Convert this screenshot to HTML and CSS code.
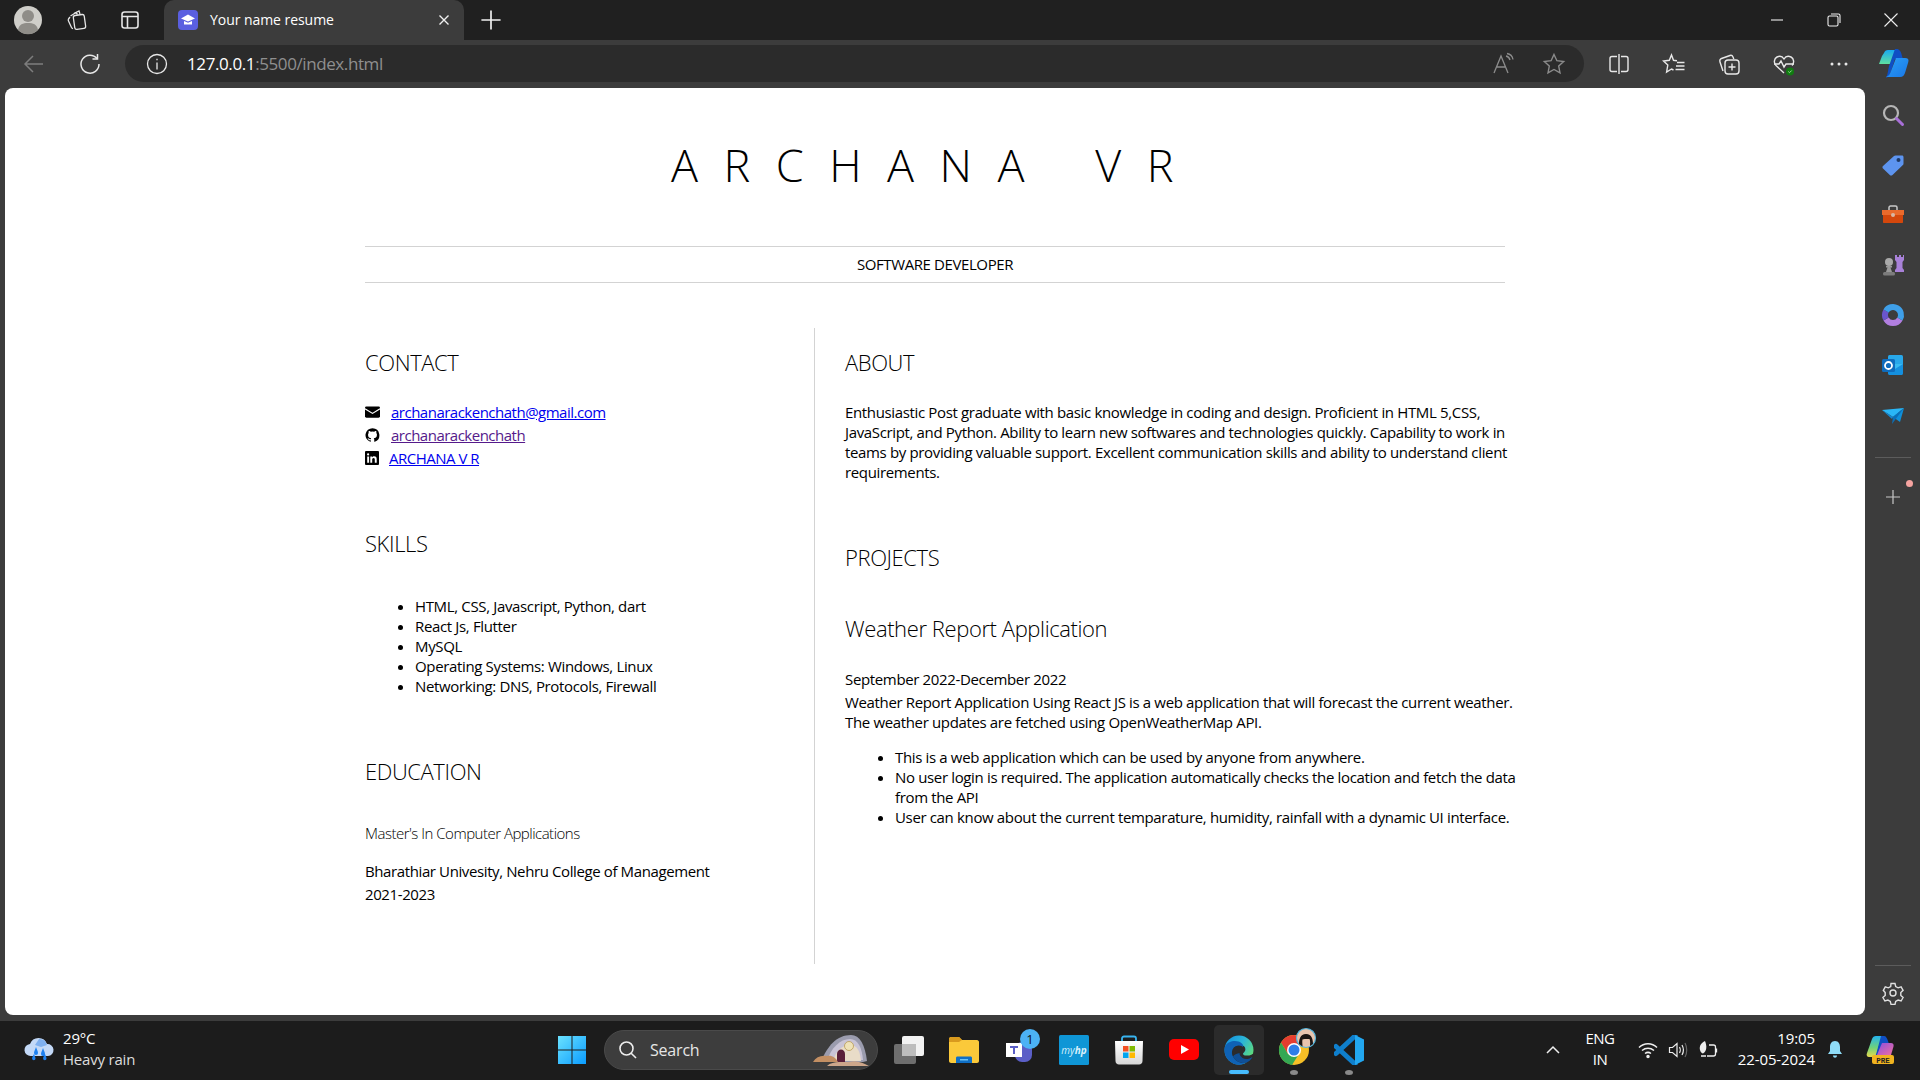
FILE: index.html
```html
<!DOCTYPE html>
<html lang="en">
<head>
<meta charset="utf-8">
<title>Your name resume</title>
<link rel="stylesheet" href="styles.css">
</head>
<body>
<div class="screen">
  <div class="tabstrip">
    <div class="strip-left">
      <svg class="ic30" viewBox="0 0 30 30"><circle cx="15" cy="15" r="14" fill="#cfcec9"/><circle cx="15" cy="11" r="6" fill="#8f8d88"/><path d="M5 25c1-6 5-7 10-7s9 1 10 7a14 14 0 0 1-20 0z" fill="#8f8d88"/></svg>
      <svg class="ic24 slot-ws" viewBox="0 0 24 24" fill="none" stroke="#e6e6e6" stroke-width="1.300"><path d="M9 5.500 14 3l1 3"/><path d="M5.500 8 11 4.500l1.500 2"/><rect x="9" y="7" width="11" height="14" rx="2" transform="rotate(-8 14 14)"/><path d="M5 9 3.500 11c-.4.600-.4 1.200 0 2l3 6.500c.4.800 1 1 1.500 1"/></svg>
      <svg class="ic24 slot-vt" viewBox="0 0 24 24" fill="none" stroke="#e6e6e6" stroke-width="1.600"><rect x="4" y="4" width="16" height="16" rx="2.500"/><path d="M4 8.500h16M9.500 8.500V20"/></svg>
    </div>
    <div class="tab">
      <svg class="favicon" viewBox="0 0 20 20"><rect width="20" height="20" rx="4" fill="#5a5fe0"/><path d="M10 4.500 3 8.500l7 3 7-3z" fill="#fff"/><path d="M6 11v3.500h8V11l-4 1.700z" fill="#fff"/></svg>
      <span class="tab-title">Your name resume</span>
      <svg class="tab-x" viewBox="0 0 12 12" stroke="#f0f0f0" stroke-width="1.400"><path d="M1.500 1.500l9 9M10.500 1.500l-9 9"/></svg>
    </div>
    <svg class="ic24 slot-plus" viewBox="0 0 20 20" stroke="#f0f0f0" stroke-width="1.400"><path d="M10 2v16M2 10h16"/></svg>
    <div class="win-btns">
      <svg class="ic16" viewBox="0 0 16 16" stroke="#eee" stroke-width="1.100"><path d="M2 8h12"/></svg>
      <svg class="ic16" viewBox="0 0 16 16" fill="none" stroke="#eee" stroke-width="1.100"><rect x="2" y="4" width="10" height="10" rx="1.500"/><path d="M5 2h7.500c.9 0 1.500.6 1.500 1.500V11"/></svg>
      <svg class="ic16" viewBox="0 0 16 16" stroke="#eee" stroke-width="1.100"><path d="M1.500 1.500l13 13M14.500 1.500l-13 13"/></svg>
    </div>
  </div>

  <div class="toolbar">
    <svg class="ic24 slot-back" viewBox="0 0 24 24" fill="none" stroke="#7d7d7d" stroke-width="1.500"><path d="M21 12H3.500M11 4l-8 8 8 8"/></svg>
    <svg class="ic24 slot-refresh" viewBox="0 0 24 24" fill="none" stroke="#e8e8e8" stroke-width="1.500"><path d="M19 6.500A9 9 0 1 0 21 12"/><path d="M19.500 2v5h-5"/></svg>
    <div class="omnibox">
      <svg class="ic24" viewBox="0 0 24 24" fill="none" stroke="#e8e8e8" stroke-width="1.300"><circle cx="12" cy="12" r="9.500"/><path d="M12 10.500V17.500M12 6.800v1.400"/></svg>
      <span class="url"><span class="url-host">127.0.0.1</span>:5500/index.html</span>
      <svg class="ic24 slot-read" viewBox="0 0 24 24" fill="none" stroke="#8c8c8c" stroke-width="1.300"><path d="M2 21 9 4l7 17M5 15h8"/><path d="M14 4c2 .5 3.500 2 4 4M15 1.500c3 .5 5.500 3 6 6"/></svg>
      <svg class="ic24 slot-star" viewBox="0 0 24 24" fill="none" stroke="#8c8c8c" stroke-width="1.400"><path d="M12 2.500l2.900 6.200 6.800.8-5 4.600 1.300 6.700L12 17.500l-6 3.300 1.300-6.700-5-4.600 6.800-.8z"/></svg>
    </div>
    <div class="tools">
      <svg class="ic24" viewBox="0 0 24 24" fill="none" stroke="#e8e8e8" stroke-width="1.400"><path d="M10 4.500H5a2 2 0 0 0-2 2v11a2 2 0 0 0 2 2h5M14 4.500h5a2 2 0 0 1 2 2v11a2 2 0 0 1-2 2h-5M12 2v20"/></svg>
      <svg class="ic24" viewBox="0 0 24 24" fill="none" stroke="#e8e8e8" stroke-width="1.400"><path d="M15 8.800 11.500 8.300 9.500 3 7.300 8.300 1.500 9l4.300 4-1.200 7 4.900-3 2 1"/><path d="M15 10.500h7.500M14 14h8.500M13.500 17.500h9"/></svg>
      <svg class="ic24" viewBox="0 0 24 24" fill="none" stroke="#e8e8e8" stroke-width="1.400"><path d="M6 19 3 10c-.5-1.500 0-3 1.500-3.500L13 3.500c1.500-.5 2.500.3 3 1.500l.8 2"/><rect x="8" y="8" width="14" height="14" rx="3"/><path d="M15 11.500v7M11.500 15h7"/></svg>
      <svg class="ic24" viewBox="0 0 24 24" fill="none" stroke="#e8e8e8" stroke-width="1.400"><path d="M12 21 4 13.500C1.500 11 2 6.500 5 5s5.500-.5 7 2c1.500-2.500 4-3.500 7-2s3.500 6 1 8.500"/><path d="M2 12h5l2-3 3 6 2-3h8"/><circle cx="18" cy="19.500" r="4" fill="#107c10" stroke="none"/><path d="M16.300 19.500l1.200 1.200 2.200-2.200" stroke="#9fd89f" stroke-width="1"/></svg>
      <svg class="ic24" viewBox="0 0 24 24" fill="#e8e8e8"><circle cx="5" cy="12" r="1.500"/><circle cx="12" cy="12" r="1.500"/><circle cx="19" cy="12" r="1.500"/></svg>
    </div>
    <svg class="ic32 slot-copilot" viewBox="0 0 32 32"><defs><linearGradient id="cpa" x1="0" y1="0" x2="0" y2="1"><stop offset="0" stop-color="#19a8f0"/><stop offset="1" stop-color="#5fe0a0"/></linearGradient><linearGradient id="cpb" x1="0" y1="0" x2="1" y2="1"><stop offset="0" stop-color="#2aa0f5"/><stop offset="1" stop-color="#1a78e8"/></linearGradient></defs><path d="M7 5c.7-2 2-3 4-3h8l-4 14H2L5 8z" fill="url(#cpa)"/><path d="M18 1h2c2 0 4 2 5 7l1 3h-8l-4 12c-.8 3-2 6-5 7 2-4 2-8 3-12z" fill="#0f4fc4"/><path d="M19 10h9c3 0 4 1.500 3.300 4l-3 10c-.8 3-2.300 5-5.300 5H9c3-1 4-3 5-6z" fill="url(#cpb)"/></svg>
  </div>

  <div class="middle">
    <main class="page">
      <header class="head">
        <h1 class="name">ARCHANA VR</h1>
      </header>
      <div class="role">SOFTWARE DEVELOPER</div>
      <div class="cols">
        <div class="col-left">
          <section class="sec-contact">
            <h2 class="title">CONTACT</h2>
            <div class="contact-row">
              <svg class="ci" viewBox="0 0 16 12"><rect width="16" height="12" rx="1.500" fill="#000"/><path d="M0 2.500 8 7.500 16 2.500" fill="none" stroke="#fff" stroke-width="1.200"/></svg>
              <a class="link" href="#mail">archanarackenchath@gmail.com</a>
            </div>
            <div class="contact-row">
              <svg class="ci" viewBox="0 0 16 16"><path d="M8 .2a8 8 0 0 0-2.500 15.600c.4.100.5-.2.500-.4v-1.400c-2.200.5-2.700-1-2.700-1-.4-.9-.9-1.200-.9-1.200-.7-.5.100-.5.100-.5.800.1 1.200.8 1.200.8.700 1.200 1.900.9 2.300.7.100-.5.300-.9.500-1.100-1.800-.2-3.600-.9-3.600-4 0-.9.300-1.600.8-2.100-.1-.2-.4-1 .1-2.100 0 0 .7-.2 2.200.8a7.600 7.600 0 0 1 4 0c1.500-1 2.200-.8 2.200-.8.400 1.100.2 1.900.1 2.100.5.600.8 1.300.8 2.100 0 3.100-1.900 3.700-3.700 3.900.3.300.6.800.6 1.500v2.200c0 .2.100.5.600.4A8 8 0 0 0 8 .2z" fill="#000"/></svg>
              <a class="link visited" href="#gh">archanarackenchath</a>
            </div>
            <div class="contact-row row-li">
              <svg class="ci" viewBox="0 0 14 14"><rect width="14" height="14" rx="1" fill="#000"/><path d="M2.200 5.400h1.900v6.400H2.200zM3.100 2.300a1.100 1.100 0 1 1 0 2.200 1.100 1.100 0 0 1 0-2.200zM5.300 5.400h1.800v.9c.4-.6 1-1.100 2-1.100 2 0 2.600 1.300 2.600 3v3.600H9.800V8.600c0-.8-.2-1.700-1.200-1.700S7.200 7.700 7.200 8.600v3.200H5.300z" fill="#fff"/></svg>
              <a class="link" href="#li">ARCHANA V R</a>
            </div>
          </section>
          <section class="sec-skills">
            <h2 class="title">SKILLS</h2>
            <ul class="list">
              <li>HTML, CSS, Javascript, Python, dart</li>
              <li>React Js, Flutter</li>
              <li>MySQL</li>
              <li>Operating Systems: Windows, Linux</li>
              <li>Networking: DNS, Protocols, Firewall</li>
            </ul>
          </section>
          <section class="sec-edu">
            <h2 class="title">EDUCATION</h2>
            <h3 class="degree">Master's In Computer Applications</h3>
            <p class="edu-line">Bharathiar Univesity, Nehru College of Management</p>
            <p class="edu-line">2021-2023</p>
          </section>
        </div>
        <div class="col-right">
          <section class="sec-about">
            <h2 class="title">ABOUT</h2>
            <p class="para">Enthusiastic Post graduate with basic knowledge in coding and design. Proficient in HTML 5,CSS,<br>JavaScript, and Python. Ability to learn new softwares and technologies quickly. Capability to work in<br>teams by providing valuable support. Excellent communication skills and ability to understand client<br>requirements.</p>
          </section>
          <section class="sec-projects">
            <h2 class="title">PROJECTS</h2>
            <h3 class="project-name">Weather Report Application</h3>
            <div class="dates">September 2022-December 2022</div>
            <p class="para">Weather Report Application Using React JS is a web application that will forecast the current weather.<br>The weather updates are fetched using OpenWeatherMap API.</p>
            <ul class="list list-project">
              <li>This is a web application which can be used by anyone from anywhere.</li>
              <li>No user login is required. The application automatically checks the location and fetch the data<br>from the API</li>
              <li>User can know about the current temparature, humidity, rainfall with a dynamic UI interface.</li>
            </ul>
          </section>
        </div>
      </div>
    </main>
    <aside class="sidebar">
      <svg class="ic24 sb-first" viewBox="0 0 24 24" fill="none"><circle cx="10" cy="10" r="7" stroke="#b5b5b5" stroke-width="2.200"/><path d="M15.500 15.500l6 6" stroke="#a86fd8" stroke-width="3" stroke-linecap="round"/></svg>
      <svg class="ic24" viewBox="0 0 24 24"><path d="M2 13 13 3c.4-.4 1-.6 1.600-.6H21c.9 0 1.500.6 1.500 1.500v6.500c0 .6-.2 1.200-.6 1.600L11.500 22c-.8.700-2 .7-2.700 0L2 15.500c-.7-.7-.7-1.800 0-2.500z" fill="#5d94ef"/><circle cx="17.500" cy="7" r="2" fill="#1f3a66"/></svg>
      <svg class="ic24" viewBox="0 0 24 24"><path d="M8 7V4.500C8 3.700 8.700 3 9.500 3h5c.8 0 1.500.7 1.500 1.500V7" fill="none" stroke="#c8c8c8" stroke-width="1.500"/><path d="M1 7h22v5H1z" fill="#ea6a2c"/><path d="M2 12h20v7c0 .6-.4 1-1 1H3c-.6 0-1-.4-1-1z" fill="#d4470c"/><circle cx="12" cy="12" r="2" fill="#d8b7a5"/></svg>
      <svg class="ic24" viewBox="0 0 24 24"><path d="M14 2h2v2h2V2h2v2h2V2h1v5l-1.500 2v6l1.500 2v2h-9v-2l1.500-2V9L14 7z" fill="#a881d8"/><circle cx="8" cy="9" r="4" fill="#a9a9a9"/><path d="M5 13h6v1.500H9.500L11 19H5l1.500-4.500H5z" fill="#9a9a9a"/><rect x="2" y="19" width="12" height="3.500" rx="1.500" fill="#7c7c7c"/></svg>
      <svg class="ic24" viewBox="0 0 24 24" fill="none" stroke-width="6"><path d="M18.930 16A8 8 0 0 1 5.070 16" stroke="#b27fe0"/><path d="M5.070 16A8 8 0 0 1 5.070 8" stroke="#6a55cc"/><path d="M5.070 8A8 8 0 0 1 18.930 16" stroke="#3f9fe8"/></svg>
      <svg class="ic24" viewBox="0 0 24 24"><rect x="7" y="2" width="15" height="15" rx="1.500" fill="#28a8ea"/><path d="M7 11h15v9.500c0 .8-.7 1.500-1.500 1.500h-12c-.8 0-1.500-.7-1.500-1.500z" fill="#1490df"/><path d="M22 11l-8 5-7-5" fill="#50d9ff" opacity=".6"/><rect x="1" y="6" width="13" height="13" rx="1.500" fill="#0f6cbd"/><circle cx="7.500" cy="12.500" r="3.500" fill="none" stroke="#fff" stroke-width="1.800"/></svg>
      <svg class="ic24" viewBox="0 0 24 24"><path d="M1 7l22-2-11 9z" fill="#29b6f6"/><path d="M23 5 12 14l7 5z" fill="#0f8fd8"/><path d="M23 5 12 14l-1 7 3-4z" fill="#0a6fb8"/><path d="M1 7l11 7-1 2z" fill="#1487d0"/></svg>
      <div class="sb-rule sb-rule-top"></div>
      <div class="sb-add">
        <svg class="ic16" viewBox="0 0 16 16" stroke="#c8c8c8" stroke-width="1.200"><path d="M8 1v14M1 8h14"/></svg>
        <span class="sb-dot"></span>
      </div>
      <div class="sb-bottom">
        <div class="sb-rule"></div>
        <svg class="ic24 sb-gear" viewBox="0 0 24 24" fill="none" stroke="#e0e0e0" stroke-width="1.400"><circle cx="12" cy="12" r="3"/><path d="M10 2.500h4l.7 3 2.400 1.300 3-.9 2 3.400-2.300 2.200v2.900l2.300 2.100-2 3.500-3-.9-2.400 1.300-.7 3h-4l-.7-3-2.400-1.300-3 .9-2-3.500 2.300-2.100v-2.900L2.300 9.300l2-3.400 3 .9 2.400-1.300z"/></svg>
      </div>
    </aside>
  </div>

  <footer class="taskbar">
    <div class="weather">
      <svg class="ic32" viewBox="0 0 32 32"><path d="M8 22a6 6 0 0 1-1-12 9 9 0 0 1 17 0 6 6 0 0 1 1 12z" fill="#c3d9f7"/><path d="M16 5a8 8 0 0 1 8 6l-6 2-6-2z" fill="#7fb0ef"/><path d="M13 13c1 3 2 4 2 6a2 2 0 0 1-4 0c0-2 1-3 2-6zM20 14c1 3 2 4 2 6a2 2 0 0 1-4 0c0-2 1-3 2-6zM11 20c.7 2 1.500 3 1.500 4.500a1.700 1.700 0 0 1-3.400 0C9.100 23 10 22 11 20zM22 20c.7 2 1.500 3 1.500 4.500a1.700 1.700 0 0 1-3.400 0c0-1.500.9-2.500 1.900-4.500z" fill="#1d80f0"/></svg>
      <div class="weather-text"><span>29°C</span><span class="weather-sub">Heavy rain</span></div>
    </div>
    <div class="task-center">
      <svg class="ic30 start" viewBox="0 0 30 30"><defs><linearGradient id="win" x1="0" y1="0" x2="1" y2="1"><stop offset="0" stop-color="#6be2ff"/><stop offset="1" stop-color="#0a9cff"/></linearGradient></defs><path d="M1 1h13.500v13.500H1zM15.500 1H29v13.500H15.500zM1 15.500h13.500V29H1zM15.500 15.500H29V29H15.500z" fill="url(#win)"/></svg>
      <div class="searchbox">
        <svg class="ic20" viewBox="0 0 20 20" fill="none" stroke="#eee" stroke-width="1.600"><circle cx="8.500" cy="8.500" r="6.500"/><path d="M13.200 13.200 18 18"/></svg>
        <span class="search-text">Search</span>
        <svg class="search-art" viewBox="0 0 58 32"><path d="M8 28C14 12 24 1 38 1c9 0 14 10 16 26l-4 1z" fill="#9b9cae"/><path d="M14 27C18 14 27 5 37 5c8 0 12 9 13 21z" fill="#c9c4d6"/><path d="M20 27c3-10 9-16 17-16s10 7 11 16z" fill="#e9dcc8"/><path d="M24 28v-8c0-6 8-6 8 0v8z" fill="#5a1f3a"/><circle cx="36" cy="12" r="4.500" fill="#efe2b8" stroke="#b89a55" stroke-width=".8"/><path d="M0 28c3-5 8-7 14-6 5-1 9 2 11 6z" fill="#c38f63"/><path d="M14 32c3-3 8-4 12-4h10c8-2 14 1 20 4z" fill="#cda68a"/></svg>
      </div>
      <div class="apps">
        <svg class="ic30" viewBox="0 0 30 30"><rect x="8" y="1" width="22" height="20" rx="2" fill="#f2f2f2"/><rect y="9" width="22" height="20" rx="2" fill="#6e6e6e"/><rect x="8" y="9" width="14" height="12" fill="#bdbdbd"/></svg>
        <svg class="ic30" viewBox="0 0 30 30"><path d="M0 4c0-1 .7-2 2-2h8l3 3h15c1 0 2 1 2 2v19c0 1-1 2-2 2H2c-1 0-2-1-2-2z" fill="#fbc93a"/><path d="M0 4c0-1 .7-2 2-2h8l3 3-3 2H0z" fill="#d99a1e"/><path d="M7 23c0-1 .6-1.500 1.500-1.500h13c.9 0 1.500.5 1.500 1.500v5H7z" fill="#0f6fc6"/><rect x="11" y="24" width="8" height="1.500" fill="#6cc3f5"/></svg>
        <div class="app-wrap">
          <svg class="ic30" viewBox="0 0 30 30"><rect x="11" y="7" width="17" height="20" rx="7" fill="#5b5fc7"/><rect x="2" y="8" width="16" height="14" fill="#fff"/><path d="M6 11h8v2h-3v6H9v-6H6z" fill="#5b5fc7"/></svg>
          <span class="app-badge">1</span>
        </div>
        <svg class="ic30" viewBox="0 0 30 30"><rect width="30" height="30" rx="1.500" fill="#0f96d6"/><text x="15" y="19" class="myhp">my<tspan class="myhp-b">hp</tspan></text></svg>
        <svg class="ic30" viewBox="0 0 30 30"><defs><linearGradient id="bag" x1="0" y1="0" x2="0" y2="1"><stop offset="0" stop-color="#fff"/><stop offset="1" stop-color="#d6d6d6"/></linearGradient></defs><path d="M8 8V3.500C8 2 9 1.500 10 1.500h10c1 0 2 .5 2 2V8" fill="none" stroke="#38b4f0" stroke-width="1.800"/><path d="M1 6h28l-.5 20c0 2-1.500 3.500-3.500 3.500H5c-2 0-3.500-1.500-3.500-3.500z" fill="url(#bag)"/><rect x="9" y="11" width="5.500" height="5.500" fill="#f25022"/><rect x="15.500" y="11" width="5.500" height="5.500" fill="#7fba00"/><rect x="9" y="17.500" width="5.500" height="5.500" fill="#00a4ef"/><rect x="15.500" y="17.500" width="5.500" height="5.500" fill="#ffb900"/></svg>
        <svg class="ic30" viewBox="0 0 30 30"><rect y="4" width="30" height="21" rx="5" fill="#f00"/><path d="M12 10l8 4.500-8 4.500z" fill="#fff"/></svg>
        <div class="app-active">
          <svg class="ic30" viewBox="0 0 30 30"><defs><linearGradient id="edg" x1="0" y1="0" x2="1" y2=".6"><stop offset="0" stop-color="#0f8ce0"/><stop offset=".55" stop-color="#2bb5d8"/><stop offset="1" stop-color="#5fdc7a"/></linearGradient></defs><circle cx="15" cy="15" r="14.500" fill="url(#edg)"/><path d="M30 17c-1 3-5 4-9 3.500-1.500-.2-2-1.200-2-2 2-2 3-3.500 2-6-1.500-3-6-3.500-9-2C8 12 6.500 16 7.500 20c1 4 4 7 8 8 4 .8 8-.3 11-3 2-2 3.500-5 3.500-8z" fill="#2b2b2b"/><path d="M.5 15C.5 8.500 6 6 11 6c5 0 9 3 8 6-1-1.500-5-2.500-8-.5-3 2-4 6.500-2 10 2 4 7 7 12.500 6.500-2 1-4 1.900-6.500 1.900C6.500 29.500.5 23 .5 15z" fill="#0f62b5"/><path d="M9 21.500c2 4 7 7 12.500 6.500 3-1 5.500-3 7-6-3 2-7 3-10 1-2-1.500-3-3-3-5-2 .5-5 1-6.500 3.500z" fill="#0f4f96"/></svg>
          <span class="pill-active"></span>
        </div>
        <div class="app-run">
          <svg class="ic30 over" viewBox="0 0 30 30"><circle cx="15" cy="15" r="15" fill="#f6bf26"/><path d="M15 0A15 15 0 0 0 2 7.500L9 19l6-9h13A15 15 0 0 0 15 0z" fill="#e53d30"/><path d="M2 7.500A15 15 0 0 0 13 30l6-9.500L9 19z" fill="#34a853"/><circle cx="15" cy="15" r="7" fill="#fff"/><circle cx="15" cy="15" r="5.500" fill="#2f7ee8"/><circle cx="27" cy="3" r="9.500" fill="#e8c4ae" stroke="#55b5dc" stroke-width="1.200"/><path d="M20 9c0-4 1-10 7-10s7 6 7 10l-3 2c0-3 .5-5-.5-7-2 0-6-.5-7 .5-.5 2 0 4 0 7z" fill="#1c1513"/></svg>
          <span class="dot-run"></span>
        </div>
        <div class="app-run">
          <svg class="ic30" viewBox="0 0 30 30"><path d="M21 1 2 18.500M2 11.500 21 29" stroke="#0f7fcc" stroke-width="5" fill="none" stroke-linecap="round"/><path d="M21 0l9 4.500v21L21 30V22L21 8z" fill="#22a7f0"/></svg>
          <span class="dot-run"></span>
        </div>
      </div>
    </div>
    <div class="tray">
      <svg class="ic16" viewBox="0 0 16 16" fill="none" stroke="#eee" stroke-width="1.500"><path d="M2 11l6-6 6 6"/></svg>
      <div class="lang"><span>ENG</span><span>IN</span></div>
      <div class="tray-icons">
        <svg class="ic20" viewBox="0 0 20 20" fill="none" stroke="#eee" stroke-width="1.500"><path d="M1 7.500c5-5 13-5 18 0M4 10.500c3.500-3 8.500-3 12 0M7 13.500c2-1.500 4-1.500 6 0"/><circle cx="10" cy="16.500" r="1" fill="#eee"/></svg>
        <svg class="ic20" viewBox="0 0 20 20" fill="none" stroke="#eee" stroke-width="1.200"><path d="M1.500 7.500h3L9 3.500v13l-4.500-4h-3z"/><path d="M11.500 7c1 1.500 1 4.500 0 6M14 5c1.700 3 1.700 7 0 10"/><path d="M17 3c2.300 4 2.300 10 0 14" stroke="#666"/></svg>
        <svg class="ic20" viewBox="0 0 20 20" fill="none" stroke="#eee" stroke-width="1.300"><path d="M8 16H3M11 5h4.500c1 0 2 1 2 2v7c0 1-1 2-2 2H9"/><path d="M18.500 8.500v4"/><path d="M7 1C3 3 1 6 2 10c.5 2 2 3.500 3 3.500C9 11 9 6 7 1z" fill="#eee" stroke="none"/></svg>
      </div>
      <div class="clock"><span>19:05</span><span>22-05-2024</span></div>
      <svg class="ic20 slot-bell" viewBox="0 0 20 20"><path d="M10 1c-3.500 0-5 3-5 6v4l-2 3h14l-2-3V7c0-3-1.500-6-5-6z" fill="#8fdcf7"/><path d="M8 15.500h4c0 3-4 3-4 0z" fill="#8fdcf7"/></svg>
      <svg class="ic30 slot-tray-cp" viewBox="0 0 30 30"><defs><linearGradient id="cpr" x1="0" y1="0" x2="0" y2="1"><stop offset="0" stop-color="#24b4f0"/><stop offset=".55" stop-color="#6fd27a"/><stop offset="1" stop-color="#e8d94a"/></linearGradient><linearGradient id="cps" x1="0" y1="0" x2="1" y2="1"><stop offset="0" stop-color="#8a4fe0"/><stop offset="1" stop-color="#f06fa0"/></linearGradient></defs><path d="M6 4c.7-2 2-3 4-3h6l-4 13-2 8H3c-2 0-3-2-2-4z" fill="url(#cpr)"/><path d="M15 1h3c2 0 3 2 4 5l1 3h-7l-2 7-2 6H8c2-1 2-3 3-6z" fill="#0f4fc4"/><path d="M16 8h9c2 0 3 1.500 2.500 3.500L25 20H11l2-5z" fill="url(#cps)"/><rect x="6" y="20" width="22" height="9" rx="2" fill="#f0b31f"/><text x="17" y="27.500" class="pre">PRE</text></svg>
    </div>
  </footer>
</div>
</body>
</html>
```
FILE: styles.css
```css
* { box-sizing: border-box; }
html, body { margin: 0; padding: 0; }
body { font-family: "Open Sans", "Noto Sans", sans-serif; background: #3c3c3c; }
.screen { width: 1920px; height: 1080px; display: flex; flex-direction: column; overflow: hidden; background: #3c3c3c; }
svg { display: block; flex: none; }
svg.over { overflow: visible; }
.ic16 { width: 16px; height: 16px; }
.ic20 { width: 20px; height: 20px; }
.ic24 { width: 24px; height: 24px; }
.ic30 { width: 30px; height: 30px; }
.ic32 { width: 32px; height: 32px; }

/* tab strip */
.tabstrip { height: 40px; background: #202020; display: flex; align-items: center; color: #fff; flex: none; }
.strip-left { display: flex; align-items: center; width: 164px; padding-left: 13px; }
.slot-ws { margin-left: 22px; }
.slot-vt { margin-left: 29px; }
.tab { width: 300px; height: 40px; background: #3c3c3c; border-radius: 10px 10px 0 0; display: flex; align-items: center; padding: 0 14px; }
.favicon { width: 20px; height: 20px; }
.tab-title { font-size: 14px; margin-left: 12px; flex: 1; letter-spacing: -0.05px; padding-bottom: 2px; }
.tab-x { width: 12px; height: 12px; }
.slot-plus { margin-left: 15px; }
.win-btns { margin-left: auto; display: flex; gap: 41px; padding-right: 21px; }

/* toolbar */
.toolbar { height: 48px; display: flex; align-items: center; flex: none; padding: 5px 0 6px; }
.slot-back { margin-left: 22px; }
.slot-refresh { margin-left: 32px; }
.omnibox { margin-left: 23px; width: 1459px; height: 37px; border-radius: 19px; background: #2b2b2b; display: flex; align-items: center; padding-left: 20px; }
.url { color: #8f8f8f; font-size: 17px; margin-left: 18px; letter-spacing: -0.4px; }
.url-host { color: #fff; }
.slot-read { margin-left: auto; margin-right: 26px; }
.slot-star { margin-right: 18px; }
.tools { display: flex; gap: 31px; margin-left: 23px; }
.slot-copilot { margin-left: 26px; }

/* main area */
.middle { flex: none; height: 927px; display: flex; padding-left: 5px; }
.page { width: 1860px; background: #fff; border-radius: 8px; padding: 0 360px; color: #000; overflow: hidden; }
.head { height: 158px; padding-top: 47px; }
.name { margin: 0; height: 60px; line-height: 60px; font-size: 45px; font-weight: 300; letter-spacing: 25.500px; text-align: center; word-spacing: 8px; }
.role { height: 37px; border-top: 1px solid #d3d3d3; border-bottom: 1px solid #d3d3d3; display: flex; align-items: center; justify-content: center; font-size: 15px; letter-spacing: -0.4px; padding-bottom: 2px; }
.cols { margin-top: 45px; height: 636px; display: grid; grid-template-columns: 450px 1fr; }
.col-left { border-right: 1px solid #d3d3d3; padding-top: 19px; }
.col-right { padding: 19px 0 0 30px; width: 700px; white-space: nowrap; }
.title { font-size: 22px; line-height: 30px; font-weight: 300; margin: 0; letter-spacing: -0.4px; }
.sec-contact .title { margin-bottom: 23px; }
.sec-about .title { margin-bottom: 25px; }
.contact-row { display: flex; align-items: center; height: 23px; font-size: 15px; letter-spacing: -0.5px; }
.ci { width: 15px; height: 14px; margin-right: 11px; }
.row-li .ci { width: 14px; height: 14px; margin-right: 10px; }
.link { color: #0000ee; text-decoration: underline; }
.link.visited { color: #551a8b; }
.sec-skills { margin-top: 59px; }
.sec-skills .title { margin-bottom: 38px; }
.sec-edu .title { margin-bottom: 37px; }
.list { margin: 0; padding: 0 0 0 50px; font-size: 15px; line-height: 20px; letter-spacing: -0.35px; }
.sec-edu { margin-top: 60px; }
.degree { font-size: 15px; font-weight: 300; line-height: 20px; margin: 0 0 17px; letter-spacing: -0.5px; }
.edu-line { font-size: 15px; line-height: 22.500px; margin: 0; letter-spacing: -0.39px; }
.para { font-size: 15px; line-height: 20px; margin: 0; letter-spacing: -0.35px; }
.sec-projects { margin-top: 60px; }
.project-name { font-size: 22px; font-weight: 300; line-height: 30px; margin: 41px 0 24px; letter-spacing: -0.4px; }
.dates { font-size: 15px; line-height: 24px; padding-bottom: 1px; letter-spacing: -0.35px; }
.list-project { margin-top: 15px; }

/* sidebar */
.sidebar { width: 55px; display: flex; flex-direction: column; align-items: center; padding-left: 1px; }
.sidebar > .ic24 { margin-bottom: 26px; }
.sidebar > .sb-first { margin-top: 15px; }
.sb-rule { width: 36px; height: 1px; background: #5c5c5c; flex: none; }
.sb-rule-top { margin-top: 4px; }
.sb-add { position: relative; margin-top: 31px; }
.sb-dot { position: absolute; width: 7px; height: 7px; border-radius: 50%; background: #f5a3a0; left: 21px; top: -9px; }
.sb-bottom { margin-top: auto; display: flex; flex-direction: column; align-items: center; padding-bottom: 10px; }
.sb-gear { margin-top: 15px; }

/* taskbar */
.taskbar { margin-top: 6px; height: 59px; flex: none; background: #1c1c1c; display: flex; align-items: center; color: #fff; padding-bottom: 1px; }
.weather { display: flex; align-items: center; padding-left: 23px; width: 380px; gap: 8px; }
.weather-text { display: flex; flex-direction: column; font-size: 15px; line-height: 21px; letter-spacing: -0.2px; padding-bottom: 2px; }
.weather-sub { color: #ddd; }
.task-center { display: flex; align-items: center; margin-left: 177px; }
.searchbox { width: 274px; height: 40px; background: #3d3d3d; border-radius: 20px; margin-left: 17px; display: flex; align-items: center; padding: 0 6px 0 13px; border: 1px solid #4a4a4a; }
.search-text { font-size: 16px; margin-left: 12px; color: #e6e6e6; letter-spacing: -0.2px; flex: 1; }
.search-art { width: 58px; height: 32px; }
.apps { display: flex; align-items: center; gap: 25px; margin-left: 16px; }
.app-wrap { position: relative; }
.app-badge { position: absolute; left: 16px; top: -6px; width: 20px; height: 20px; border-radius: 50%; background: #4cb2f5; color: #111; font-size: 13px; line-height: 20px; text-align: center; }
.app-active { position: relative; width: 50px; height: 50px; margin: 0 -10px; background: #2b2b2b; border-radius: 5px; display: flex; align-items: center; justify-content: center; }
.pill-active { position: absolute; bottom: 1px; left: 15px; width: 20px; height: 4px; border-radius: 2px; background: #47bdff; }
.app-run { position: relative; }
.dot-run { position: absolute; left: 11px; bottom: -10px; width: 8px; height: 5px; border-radius: 50%; background: #8a8a8a; }
.myhp { font-family: "Open Sans", sans-serif; font-size: 10px; font-style: italic; fill: #d8f0fb; text-anchor: middle; }
.myhp-b { font-weight: 700; }
.tray { display: flex; align-items: center; margin-left: auto; padding-right: 24px; }
.lang { display: flex; flex-direction: column; align-items: center; font-size: 15px; line-height: 21px; margin-left: 15px; width: 48px; letter-spacing: -0.5px; padding-bottom: 2px; }
.tray-icons { display: flex; gap: 10px; margin-left: 14px; }
.clock { display: flex; flex-direction: column; align-items: flex-end; font-size: 15px; line-height: 21px; width: 88px; margin-left: 9px; letter-spacing: -0.1px; padding-bottom: 2px; }
.slot-bell { margin-left: 10px; }
.slot-tray-cp { margin-left: 21px; }
.pre { font-family: "Liberation Mono", monospace; font-size: 7.500px; font-weight: 700; fill: #222; text-anchor: middle; }
```
